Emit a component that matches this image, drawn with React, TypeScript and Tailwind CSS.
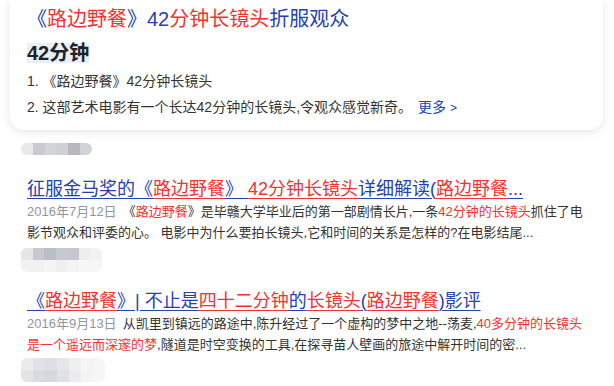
const R = ({ children }: { children: React.ReactNode }) => <span className="text-[#f73131]">{children}</span>;

const U = ({ children, red }: { children: React.ReactNode; red?: boolean }) => (
    <span className={red ? 'text-[#f73131] underline underline-offset-[3px]' : 'underline underline-offset-[3px]'}>{children}</span>
);

type BlurProps = { rows: string[][]; className?: string };

const Blur = ({ rows, className }: BlurProps) => (
    <div className={`flex flex-col overflow-hidden rounded-[6px] ml-[21px] ${className ?? ''}`}>
        {rows.map((row, i) => (
            <div key={i} className="flex">
                {row.map((c, j) => (
                    <span key={j} className="block w-[12px] h-[12px]" style={{ background: c }} />
                ))}
            </div>
        ))}
    </div>
);

const App = () => {
    return (
        <div className="w-[614px] h-[386px] overflow-hidden bg-white font-['Liberation_Sans','Noto_Sans_CJK_SC',sans-serif] text-[#333]">
            <div className="ml-[10px] mr-[11px] rounded-b-[14px] bg-white pl-[17px] pt-[5px] pb-[9px] shadow-[0_2px_10px_rgba(0,0,0,0.1)]">
                <p className="text-[20px] leading-[28px] text-[#2440b3]">
                    《<R>路边野餐</R>》42<R>分钟长镜头</R>折服观众
                </p>
                <div className="mt-[10px] block w-fit h-[20px] bg-[#e8effc] text-[20px] font-bold leading-[20px] text-[#222]">42分钟</div>
                <p className="mt-[5px] text-[14px] leading-[26px]">1. 《路边野餐》42分钟长镜头</p>
                <p className="text-[14px] leading-[26px]">
                    2. 这部艺术电影有一个长达42分钟的长镜头,令观众感觉新奇。
                    <span className="ml-[6px] text-[#2440b3]">
                        更多 <span className="text-[12px]">&gt;</span>
                    </span>
                </p>
            </div>

            <Blur
                className="mt-[13px] w-[71px]"
                rows={[['#e8e8e8', '#c9cad1', '#d3d4d9', '#cfd0d6', '#b8b7bf', '#d0d4d8']]}
            />

            <div className="pl-[27px] pr-[20px]">
                <a className="mt-[22px] block text-[18px] leading-[24px] text-[#2440b3] underline underline-offset-[3px]">
                    征服金马奖的《<U red>路边野餐</U>》 <U red>42分钟长镜头</U>详细解读(<U red>路边野餐</U>...
                </a>
                <p className="mt-[1px] text-[13px] leading-[20.5px]">
                    <span className="mr-[6px] text-[#9195a3]">2016年7月12日</span>
                    《<R>路边野餐</R>》是毕赣大学毕业后的第一部剧情长片,一条<R>42分钟的长镜头</R>抓住了电影节观众和评委的心。 电影中为什么要拍长镜头,它和时间的关系是怎样的?在电影结尾...
                </p>
            </div>

            <Blur
                className="mt-[5px] w-[81px]"
                rows={[
                    ['#e6e6e6', '#c8c9ce', '#b9bec7', '#c8c9cf', '#c5c8d1', '#eeeeef', '#f2f2f2'],
                    ['#f2f2f2', '#f1f1f1', '#f4f4f4', '#f0f0f0', '#f3f3f3', '#f6f6f6', '#f6f6f6'],
                ]}
            />

            <div className="pl-[27px] pr-[20px]">
                <a className="mt-[17px] block text-[18px] leading-[24px] text-[#2440b3] underline underline-offset-[3px]">
                    《<U red>路边野餐</U>》| 不止是<U red>四十二分钟</U>的<U red>长镜头</U>(<U red>路边野餐</U>)影评
                </a>
                <p className="mt-[1px] text-[13px] leading-[20.5px]">
                    <span className="mr-[6px] text-[#9195a3]">2016年9月13日</span>
                    从凯里到镇远的路途中,陈升经过了一个虚构的梦中之地--荡麦,<R>40多分钟的长镜头是一个遥远而深邃的梦</R>,隧道是时空变换的工具,在探寻苗人壁画的旅途中解开时间的密...
                </p>
            </div>

            <Blur
                className="mt-[3px] w-[84px]"
                rows={[
                    ['#ececec', '#e2e2e6', '#dedfe3', '#e6e6e8', '#f0f0f0', '#f5f5f5', '#f7f7f7'],
                    ['#e4e4e6', '#dadbe0', '#d6d8dd', '#e0e1e4', '#ececee', '#f3f3f3', '#f6f6f6'],
                ]}
            />
        </div>
    );
};

export default App;
